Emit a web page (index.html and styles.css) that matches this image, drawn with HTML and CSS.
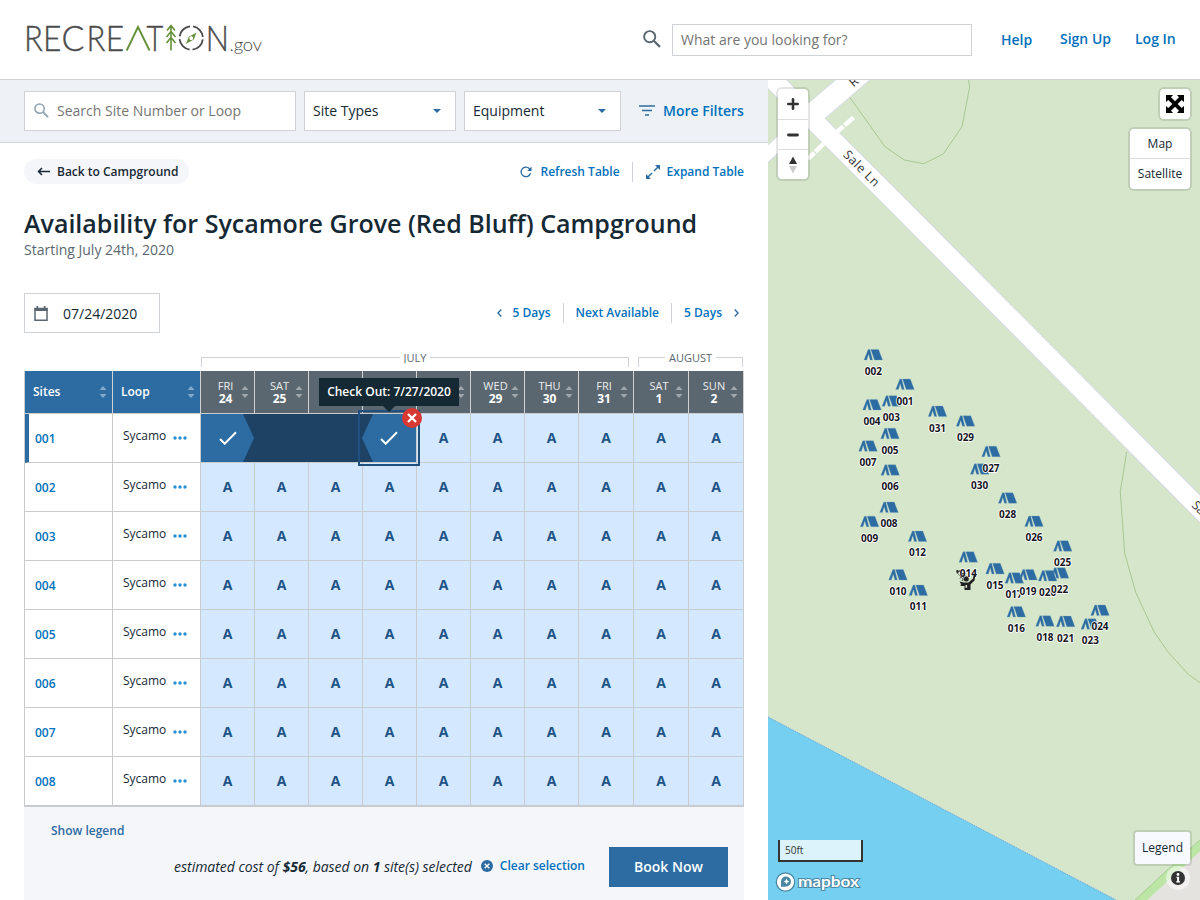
FILE: index.html
```html
<!DOCTYPE html>
<html lang="en">
<head>
<meta charset="utf-8">
<title>Availability for Sycamore Grove (Red Bluff) Campground</title>
<link rel="stylesheet" href="styles.css">
</head>
<body>
<svg class="defs" aria-hidden="true">
  <symbol id="sort" viewBox="0 0 8 14"><path d="M0.5 5 4 1l3.500 4zM0.500 9h7L4 13z" fill="currentColor"/></symbol>
  <symbol id="dots" viewBox="0 0 14 4"><circle cx="2" cy="2" r="1.700"/><circle cx="7" cy="2" r="1.700"/><circle cx="12" cy="2" r="1.700"/></symbol>
  <symbol id="glass" viewBox="0 0 18 18"><circle cx="6.700" cy="6.700" r="5.600" fill="none" stroke="currentColor" stroke-width="1.900"/><path d="M10.800 10.800 16.900 16.900" stroke="currentColor" stroke-width="2.200"/></symbol>
  <symbol id="check" viewBox="0 0 18 14"><path d="M1 8l4.700 4.700L17 1.300" fill="none" stroke="#fff" stroke-width="2"/></symbol>
  <g id="tent"><path transform="translate(10 6)" d="M-9.300 5.300-5.200-5.300h1.900L-.7 5.300h-2.400L-4.800-.5-6.600 5.300zM-2.500-5.300H5.300L9.300 5.300H1.200z" fill="#2d6ca2" stroke="#7fa9c0" stroke-width=".3"/></g>
</svg>

<header class="top">
  <svg class="logo" viewBox="24 20 242 38">
    <g class="logo-letters">
      <text transform="translate(24.100 50.700) scale(.9 1)">R</text>
      <text transform="translate(43.100 50.700) scale(.92 1)">E</text>
      <text transform="translate(61.500 50.700) scale(.98 1)">C</text>
      <text transform="translate(86.500 50.700) scale(.9 1)">R</text>
      <text transform="translate(105.700 50.700) scale(.92 1)">E</text>
      <text transform="translate(146.500 50.700) scale(.84 1)">T</text>
      <text transform="translate(205.700 50.700) scale(.89 1)">N</text>
    </g>
    <text class="logo-gov" x="229.500" y="50.800" textLength="32.500">.gov</text>
    <g fill="none" stroke="#66913b" stroke-width="1.900">
      <path d="M126.700 50.500 138 27l11.500 23.500"/>
      <path d="M171 50.500V25M167 30.500l4-5 4 5M166.500 37l4.500-5.500 4.500 5.500M166.500 43l4.500-5.500 4.500 5.500" stroke-width="1.600"/>
    </g>
    <circle cx="191.200" cy="38" r="11.700" fill="none" stroke="#4b4b4b" stroke-width="1.800" stroke-dasharray="15.380 3" stroke-dashoffset="-1.500"/>
    <path d="M196.500 32.500 193.800 39.500 186 43.800l2.800-7zM191.200 36.300a1.900 1.900 0 1 0 .01 0z" fill="#66913b" fill-rule="evenodd"/>
  </svg>
  <div class="site-search">
    <svg class="glass dark"><use href="#glass"/></svg>
    <div class="field wide">What are you looking for?</div>
  </div>
  <nav class="account"><a class="help">Help</a><a class="signup">Sign Up</a><a>Log In</a></nav>
</header>

<main class="page">
<section class="panel">
  <div class="filters">
    <div class="field find"><svg class="glass pale"><use href="#glass"/></svg>Search Site Number or Loop</div>
    <div class="field select types">Site Types<i class="caret"></i></div>
    <div class="field select equip">Equipment<i class="caret"></i></div>
    <a class="more"><svg width="16" height="11" viewBox="0 0 16 11"><path d="M0 1h16M3 5.500h10M6 10h4" stroke="#2d6ca2" stroke-width="1.700"/></svg>More Filters</a>
  </div>

  <div class="content">
    <div class="tools">
      <a class="back"><svg width="13" height="9" viewBox="0 0 13 9"><path d="M13 4.500H1.500M5 1 1.500 4.500 5 8" fill="none" stroke="#152935" stroke-width="1.500"/></svg>Back to Campground</a>
      <div class="tool-links">
        <a class="refresh"><svg width="12" height="12" viewBox="0 0 12 12"><path d="M10.500 7.300A4.800 4.800 0 1 1 9.500 2.700L11 4.200" fill="none" stroke="#2d6ca2" stroke-width="1.300"/><path d="M11.500.5v4.400H7.300z" fill="#2d6ca2"/></svg>Refresh Table</a>
        <a class="expand"><svg width="14" height="14" viewBox="0 0 14 14"><path d="M9 0h5v5zM0 9v5h5z" fill="#2d6ca2"/><path d="M12 2 8 6M6 8 2 12" stroke="#2d6ca2" stroke-width="1.500"/></svg>Expand Table</a>
      </div>
    </div>
    <h1>Availability for Sycamore Grove (Red Bluff) Campground</h1>
    <p class="starting">Starting July 24th, 2020</p>

    <div class="date-row">
      <div class="field date"><svg width="14" height="15" viewBox="0 0 14 15"><path d="M1 2.500h12v11.700H1z" fill="none" stroke="#5b6770" stroke-width="1.500"/><path d="M.5 2h13v3H.5zM2.500 0h1.700v3H2.500zM9.800 0h1.700v3H9.800z" fill="#5b6770"/></svg>07/24/2020</div>
      <div class="paging">
        <a class="prev"><svg width="5" height="8" viewBox="0 0 5 8"><path d="M4.300.5.900 4l3.400 3.500" fill="none" stroke="#2d6ca2" stroke-width="1.400"/></svg>5 Days</a>
        <a class="next-av">Next Available</a>
        <a class="next">5 Days<svg width="5" height="8" viewBox="0 0 5 8"><path d="M.7.5 4.100 4 .7 7.500" fill="none" stroke="#2d6ca2" stroke-width="1.400"/></svg></a>
      </div>
    </div>

    <div class="months">
      <div class="month july"><span>JULY</span></div>
      <div class="month august"><span>AUGUST</span></div>
    </div>

    <table class="grid">
      <colgroup><col class="c-site"><col class="c-loop"><col span="7" class="c-day"><col span="3" class="c-day-wide"></colgroup>
      <thead><tr>
        <th class="name"><div><em>Sites</em><svg><use href="#sort"/></svg></div></th>
        <th class="name"><div><em>Loop</em><svg><use href="#sort"/></svg></div></th>
        <th><div><span>FRI<b>24</b></span><svg><use href="#sort"/></svg></div></th>
        <th><div><span>SAT<b>25</b></span><svg><use href="#sort"/></svg></div></th>
        <th></th>
        <th></th>
        <th><div><span></span><svg><use href="#sort"/></svg></div></th>
        <th><div><span>WED<b>29</b></span><svg><use href="#sort"/></svg></div></th>
        <th><div><span>THU<b>30</b></span><svg><use href="#sort"/></svg></div></th>
        <th><div><span>FRI<b>31</b></span><svg><use href="#sort"/></svg></div></th>
        <th><div><span>SAT<b>1</b></span><svg><use href="#sort"/></svg></div></th>
        <th><div><span>SUN<b>2</b></span><svg><use href="#sort"/></svg></div></th>
      </tr></thead>
      <tbody>
        <tr class="chosen"><td class="site">001</td><td class="loop">Sycamo<svg><use href="#dots"/></svg></td>
          <td colspan="4" class="range"><div class="stay">
            <span class="from"><svg><use href="#check"/></svg></span><span class="to"><svg><use href="#check"/></svg></span>
            <span class="ring"></span>
            <span class="remove"><svg width="10" height="10" viewBox="0 0 10 10"><path d="M1 1l8 8M9 1 1 9" stroke="#fff" stroke-width="2.300"/></svg></span>
            <span class="tip">Check Out: 7/27/2020</span>
          </div></td>
          <td>A</td><td>A</td><td>A</td><td>A</td><td>A</td><td>A</td></tr>
        <tr><td class="site">002</td><td class="loop">Sycamo<svg><use href="#dots"/></svg></td><td>A</td><td>A</td><td>A</td><td>A</td><td>A</td><td>A</td><td>A</td><td>A</td><td>A</td><td>A</td></tr>
        <tr><td class="site">003</td><td class="loop">Sycamo<svg><use href="#dots"/></svg></td><td>A</td><td>A</td><td>A</td><td>A</td><td>A</td><td>A</td><td>A</td><td>A</td><td>A</td><td>A</td></tr>
        <tr><td class="site">004</td><td class="loop">Sycamo<svg><use href="#dots"/></svg></td><td>A</td><td>A</td><td>A</td><td>A</td><td>A</td><td>A</td><td>A</td><td>A</td><td>A</td><td>A</td></tr>
        <tr><td class="site">005</td><td class="loop">Sycamo<svg><use href="#dots"/></svg></td><td>A</td><td>A</td><td>A</td><td>A</td><td>A</td><td>A</td><td>A</td><td>A</td><td>A</td><td>A</td></tr>
        <tr><td class="site">006</td><td class="loop">Sycamo<svg><use href="#dots"/></svg></td><td>A</td><td>A</td><td>A</td><td>A</td><td>A</td><td>A</td><td>A</td><td>A</td><td>A</td><td>A</td></tr>
        <tr><td class="site">007</td><td class="loop">Sycamo<svg><use href="#dots"/></svg></td><td>A</td><td>A</td><td>A</td><td>A</td><td>A</td><td>A</td><td>A</td><td>A</td><td>A</td><td>A</td></tr>
        <tr><td class="site">008</td><td class="loop">Sycamo<svg><use href="#dots"/></svg></td><td>A</td><td>A</td><td>A</td><td>A</td><td>A</td><td>A</td><td>A</td><td>A</td><td>A</td><td>A</td></tr>
      </tbody>
    </table>

    <footer class="booking">
      <a class="show-legend">Show legend</a>
      <div class="cost-row">
        <em>estimated cost of <b>$56</b>, based on <b>1</b> site(s) selected</em>
        <a class="clear"><svg width="12" height="12" viewBox="0 0 12 12"><circle cx="6" cy="6" r="6" fill="#2d6ca2"/><path d="M3.700 3.700l4.600 4.600M8.300 3.700 3.700 8.300" stroke="#fff" stroke-width="1.400"/></svg>Clear selection</a>
        <button class="book">Book Now</button>
      </div>
    </footer>
  </div>
</section>

<section class="map">
  <svg class="canvas" viewBox="768 80 432 820">
    <path d="M768 80h432v820H768z" fill="#d5e6ca"/>
    <path d="M768 717 1116 900H768z" fill="#75cff0"/>
    <path d="M768 717 1116 900" stroke="#6fa9dc" stroke-width="1" stroke-dasharray="1.500 1"/>
    <path d="M1200 849 1141 900H1200z" fill="#e4e3df"/>
    <path d="M1203 843 1138 903" stroke="#bce6a6" stroke-width="8"/>
    <path d="M1202 838 1134 901" stroke="#a5cd90" stroke-width="1"/>
    <g fill="none" stroke="#a9c794" stroke-width="1">
      <path d="M849.300 96.700 885 146.700 904.300 160 923.700 163.700 943.300 154 962 126.700 969.700 86.700 968.300 80"/>
      <path d="M1126.700 451.700 1120.300 491.700 1124.700 553.300 1135.700 592.300 1154 631.700 1168.300 652.300 1188.300 674.300 1200 682.700"/>
    </g>
    <g stroke="#d6dce2">
      <path d="M750 57 899.500 206.500 1215 524" fill="none" stroke-width="20.500"/>
      <path d="M813 114 870 65" stroke-width="23.500"/>
      <path d="M760 161 816 110" stroke-width="14"/>
    </g>
    <g stroke="#fff" fill="none">
      <path d="M750 57 899.500 206.500 1215 524" stroke-width="18.500"/>
      <path d="M813 114 870 65" stroke-width="21.500"/>
      <path d="M760 161 816 110" stroke-width="12"/>
      <path d="M853.500 117.500 834 134.500M824 143.500 808 159" stroke-width="4.500" stroke-dasharray="12 1.500"/>
    </g>
    <g class="street">
      <text transform="translate(842.500 155.500) rotate(45)" textLength="45">Sale Ln</text>
      <text transform="translate(1191 506) rotate(45)">Sa</text>
      <text transform="translate(853.500 87.500) rotate(-40)">R</text>
    </g>
    <g class="tents">
      <use href="#tent" x="863.300" y="348.700"/><use href="#tent" x="895" y="378.300"/><use href="#tent" x="881.300" y="395"/><use href="#tent" x="862" y="398.700"/><use href="#tent" x="927.500" y="405.300"/><use href="#tent" x="955.500" y="415"/><use href="#tent" x="880" y="427.500"/><use href="#tent" x="858" y="440"/><use href="#tent" x="981" y="445.500"/><use href="#tent" x="969.700" y="463"/><use href="#tent" x="880.200" y="464"/><use href="#tent" x="997.600" y="492"/><use href="#tent" x="879" y="501.300"/><use href="#tent" x="1024" y="515.300"/><use href="#tent" x="859.600" y="515.500"/><use href="#tent" x="907.500" y="530.300"/><use href="#tent" x="1052.700" y="540"/><use href="#tent" x="958.300" y="551"/><use href="#tent" x="985" y="562.600"/><use href="#tent" x="1049.600" y="567"/><use href="#tent" x="1018" y="568.700"/><use href="#tent" x="888" y="568.800"/><use href="#tent" x="1037.600" y="569.700"/><use href="#tent" x="1004.300" y="572"/><use href="#tent" x="908.300" y="584.300"/><use href="#tent" x="1090" y="604.300"/><use href="#tent" x="1006.300" y="605.800"/><use href="#tent" x="1035" y="615"/><use href="#tent" x="1055.600" y="615.400"/><use href="#tent" x="1080.300" y="618"/>
    </g>
    <g class="pins">
      <text x="873.300" y="375">002</text><text x="891.300" y="421">003</text><text x="905" y="404.500">001</text><text x="872" y="425">004</text><text x="937.500" y="431.500">031</text><text x="965.500" y="441">029</text><text x="890" y="453.500">005</text><text x="868" y="466">007</text><text x="890.200" y="490">006</text><text x="979.700" y="489">030</text><text x="991" y="471.500">027</text><text x="1007.600" y="518">028</text><text x="889" y="527.300">008</text><text x="869.600" y="541.500">009</text><text x="1034" y="541.300">026</text><text x="917.500" y="556.300">012</text><text x="1062.700" y="566">025</text><text x="968.300" y="577">014</text><text x="995" y="588.600">015</text><text x="898" y="594.800">010</text><text x="918.300" y="610.300">011</text><text x="1014" y="598">017</text><text x="1028" y="594.700">019</text><text x="1047.600" y="595.700">020</text><text x="1059.600" y="593">022</text><text x="1016.300" y="631.800">016</text><text x="1045" y="641">018</text><text x="1065.600" y="641.500">021</text><text x="1090.300" y="644">023</text><text x="1100" y="630.300">024</text>
    </g>
    <g fill="#222">
      <circle cx="966.300" cy="579" r="2.500"/>
      <path d="M959.500 581.500 964 582.500H968.500L973 578.500 973.800 573.500 975.600 574.500 974.500 580.500 970.500 584.500V590H964.500V586H960.500L961 584z"/>
      <path d="M965.500 585h1.600v2.800H965.500z" fill="#d5e6ca"/>
      <path d="M956.500 570.500l3 .2-2.300 2.800zM958 573.500l6 7M959.500 571.500l7 5M960 578.500l4-6M962 581l3-8" stroke="#222" stroke-width=".9" stroke-dasharray="1.500 1"/>
    </g>
  </svg>

  <div class="controls">
    <button><svg width="12" height="12" viewBox="0 0 12 12"><path d="M6 1.300v9.400M1.300 6h9.400" stroke="#333" stroke-width="2.600" stroke-linecap="round"/></svg></button>
    <button><svg width="12" height="12" viewBox="0 0 12 12"><path d="M1.500 6h9" stroke="#333" stroke-width="2.800" stroke-linecap="round"/></svg></button>
    <button><svg width="8" height="18" viewBox="0 0 8 18"><path d="M0 8 4 .5 8 8z" fill="#333"/><path d="M0 10h8l-4 7.500z" fill="#ccc"/></svg></button>
  </div>
  <div class="full"><svg width="18" height="18" viewBox="0 0 18 18"><path d="M0 0h7L5 2.300 9 6.300l4-4L11 0h7v7l-2.300-2-4 4 4 4L18 11v7h-7l2-2.300-4-4-4 4L7 18H0v-7l2.300 2 4-4-4-4L0 7z"/></svg></div>
  <div class="layers"><span>Map</span><span>Satellite</span></div>
  <div class="legend">Legend</div>
  <div class="info"><svg width="14" height="14" viewBox="0 0 14 14"><circle cx="7" cy="7" r="7" fill="#333"/><path d="M5.500 5.800h2.600v4.400h1v1.300H5.200v-1.300h.9V7h-.6z" fill="#fff"/><circle cx="7" cy="3.500" r="1.400" fill="#fff"/></svg></div>
  <div class="scale">50ft</div>
  <svg class="mapbox" width="86" height="22" viewBox="0 0 86 22">
    <circle cx="10.500" cy="11" r="9.200" fill="#fff" stroke="#4a87a3" stroke-width="1.200"/>
    <path d="M6 15.700V10.400A5 5 0 1 1 11.400 15.500Q9 16 6 15.700z" fill="#4a87a3"/>
    <path d="M11.500 7.600l.9 2 2 .9-2 .9-.9 2-.9-2-2-.9 2-.9z" fill="#fff"/>
    <text x="23" y="15.500" textLength="61" lengthAdjust="spacingAndGlyphs">mapbox</text>
  </svg>
</section>
</main>
</body>
</html>
```
FILE: styles.css
```css
* { box-sizing: border-box; }
body { margin: 0; width: 1200px; height: 900px; overflow: hidden; background: #fff; color: #152935; font-family: "Open Sans", "Noto Sans", sans-serif; font-size: 14px; }
svg { display: block; flex: none; }
.defs { position: absolute; width: 0; height: 0; }
a { color: #0071bc; font-weight: 600; }
button { font: inherit; border: 0; padding: 0; }

.top { display: flex; height: 80px; border-bottom: 1px solid #d0d4d8; padding: 0 24px; }
.logo { width: 242px; height: 38px; margin-top: 20px; overflow: visible; }
.logo-letters { font-family: Lato, sans-serif; font-weight: 300; font-size: 34.5px; fill: #4b4b4b; stroke: #4b4b4b; stroke-width: .4px; }
.logo-gov { font-family: Lato, sans-serif; font-weight: 300; font-size: 18.5px; fill: #4b4b4b; }
.site-search { display: flex; margin: 24px 0 0 377px; }
.glass { width: 18px; height: 18px; }
.glass.dark { color: #5b6770; margin: 6px 11px 0 0; }
.glass.pale { color: #91a4b5; width: 15px; height: 15px; margin-right: 8px; }
.field { display: flex; align-items: center; background: #fff; border: 1px solid #cfd3d7; height: 40px; color: #152935; }
.field.wide { width: 300px; height: 32px; padding: 0 0 1px 8px; color: #757575; }
.account { display: flex; align-items: center; height: 32px; margin-top: 22px; white-space: nowrap; }
.help { width: 59px; margin-left: 29px; padding-top: 2px; }
.signup { width: 75px; }

.page { display: flex; height: 820px; }
.panel { width: 768px; }
.filters { display: flex; height: 63px; padding: 11px 24px 0; background: #eef2f6; border-bottom: 1px solid #cfd5da; gap: 8px; }
.find { width: 272px; padding: 0 0 2px 9px; color: #757575; }
.select { justify-content: space-between; padding: 0 14px 2px 8px; }
.types { width: 152px; }
.equip { width: 157px; }
.caret { margin-top: 1px; border: 4px solid transparent; border-top-color: #2d6ca2; border-bottom: 0; }
.more { display: flex; align-items: center; gap: 8px; height: 38px; margin-left: 10px; white-space: nowrap; }

.content { padding: 16px 24px 0; }
.tools { display: flex; justify-content: space-between; align-items: center; height: 25px; font-size: 12px; }
.back { display: flex; align-items: center; gap: 7px; width: 165px; height: 25px; padding-left: 13px; border-radius: 13px; background: #f5f6fa; color: #152935; }
.tool-links { display: flex; align-items: center; }
.tool-links a { display: flex; align-items: center; height: 20px; }
.refresh { gap: 9px; padding-right: 12px; border-right: 1px solid #cfd3d7; }
.expand { gap: 7px; padding-left: 13px; }
h1 { margin: 22px 0 0; font-size: 25px; line-height: 34px; font-weight: 600; white-space: nowrap; }
.starting { margin: 0; line-height: 20px; font-size: 14px; color: #5b6770; }

.date-row { display: flex; justify-content: space-between; height: 40px; margin-top: 33px; }
.date { width: 136px; padding-left: 9px; gap: 15px; }
.paging { display: flex; height: 20px; margin: 10px 5px 0 0; font-size: 12px; line-height: 20px; }
.paging a { display: flex; align-items: center; }
.prev { gap: 11px; padding-right: 12px; border-right: 1px solid #cfd3d7; }
.next-av { padding: 0 12px; border-right: 1px solid #cfd3d7; }
.next { gap: 12px; padding-left: 12px; }

.months { display: flex; gap: 9px; height: 38px; padding: 20px 0 0 177px; overflow: hidden; }
.month { display: flex; justify-content: center; height: 18px; font-size: 11px; line-height: 10px; color: #5b6770; }
.month::before, .month::after { content: ""; flex: 1; height: 9px; margin-top: 4px; border-top: 1px solid #cfd3d7; }
.month::before { border-left: 1px solid #cfd3d7; }
.month::after { border-right: 1px solid #cfd3d7; }
.month span { padding: 0 4px; height: 10px; }
.july { width: 428px; }
.july span { overflow: hidden; }
.august { width: 105px; }

.grid { width: 720px; table-layout: fixed; border-collapse: separate; border-spacing: 0; border-left: 1px solid #c9cbcd; }
.c-site, .c-loop { width: 88px; }
.c-day { width: 54px; }
.c-day-wide { width: 55px; }
.grid th { height: 43px; padding: 0; background: #5b6770; color: #fff; border-right: 1px solid #d0d2d4; border-bottom: 1px solid #c9cbcd; font-weight: 400; }
.grid th div { display: flex; align-items: center; }
.grid th span { flex: 1; padding-left: 9px; font-size: 11px; line-height: 12px; color: #e9ecee; }
.grid th b { display: block; font-size: 12px; line-height: 13px; color: #fff; }
.grid th svg { width: 8px; height: 14px; margin-right: 5px; color: #a0a8ae; }
.grid th.name { background: #2d6ca2; }
.grid th.name div { justify-content: space-between; padding-left: 8px; font-size: 12px; font-weight: 600; }
.grid th em { font-style: normal; padding-bottom: 2px; }
.grid th.name svg { color: #85a9cb; }
.grid td { height: 49px; padding: 0 0 2px; text-align: center; background: #d4e8ff; color: #205386; font-weight: 700; font-size: 14px; border-right: 1px solid #c9cbcd; border-bottom: 1px solid #c9cbcd; }
.grid tr:last-child td { border-bottom-width: 2px; height: 50px; }
.grid td.site { background: #fff; color: #0071bc; font-weight: 600; font-size: 12px; text-align: left; padding: 0 0 0 10px; }
.grid .chosen td.site { border-left: 4px solid #2d6ca2; padding-left: 6px; }
.grid td.loop { background: #fff; color: #152935; font-weight: 400; font-size: 12px; text-align: left; padding: 0 0 6px 10px; }
.loop svg { display: inline-block; width: 14px; height: 4px; margin-left: 7px; vertical-align: 0; fill: #2491d6; }
.grid td.range { background: #1d4263; padding: 0; }
.stay { position: relative; display: flex; justify-content: space-between; height: 48px; }
.from, .to { display: flex; align-items: center; justify-content: center; background: #2d6ca2; }
.from { width: 53px; clip-path: polygon(0 0, 42px 0, 100% 50%, 42px 100%, 0 100%); }
.to { width: 54px; clip-path: polygon(11px 0, 100% 0, 100% 100%, 11px 100%, 0 50%); }
.stay .from svg, .stay .to svg { width: 18px; height: 14px; }
.ring { position: absolute; left: 157px; top: -4px; width: 62px; height: 56px; border: 2px solid #205080; }
.remove { position: absolute; left: 201px; top: -6px; width: 20px; height: 20px; display: flex; align-items: center; justify-content: center; border-radius: 50%; background: #d83933; }
.tip { position: absolute; left: 118px; top: -36px; width: 140px; height: 28px; background: #152935; color: #fff; font-size: 12px; font-weight: 600; line-height: 27px; white-space: nowrap; }
.tip::after { content: ""; position: absolute; left: 64px; top: 28px; border: 6px solid transparent; border-top-color: #152935; border-bottom: 0; }

.booking { height: 94px; background: #f5f6fa; padding-top: 14px; }
.show-legend { display: block; margin-left: 27px; font-size: 12px; line-height: 20px; color: #2d6ca2; }
.cost-row { display: flex; justify-content: flex-end; align-items: center; margin-top: 6px; padding-right: 16px; height: 40px; white-space: nowrap; }
.cost-row em { padding-bottom: 2px; letter-spacing: -.03px; }
.clear { display: flex; align-items: center; gap: 7px; margin: -3px 24px 0 9px; font-size: 12px; }
.book { width: 119px; height: 40px; background: #2d6ca2; color: #fff; font-weight: 600; padding-bottom: 2px; }

.map { position: relative; width: 432px; height: 820px; overflow: hidden; }
.canvas { width: 432px; height: 820px; }
.street { font-size: 12.5px; fill: #333; }
.pins { font-size: 10px; font-weight: 700; fill: #16161d; text-anchor: middle; stroke: #fff; stroke-width: 1.6px; stroke-linejoin: round; paint-order: stroke; }
.controls, .full, .layers, .legend { position: absolute; background: #fff; border-radius: 4px; box-shadow: 0 0 0 2px rgba(0,0,0,.1); }
.controls { left: 10px; top: 9px; width: 30px; }
.controls button { display: flex; align-items: center; justify-content: center; width: 30px; height: 30px; background: none; }
.controls button + button { border-top: 1px solid #ddd; }
.full { left: 392px; top: 9px; width: 30px; height: 30px; display: flex; align-items: center; justify-content: center; }
.layers { left: 362px; top: 49px; width: 60px; height: 60px; font-size: 12px; line-height: 30px; text-align: center; }
.layers span { display: block; height: 29px; }
.layers span + span { border-top: 1px solid #ddd; }
.legend { left: 367px; top: 752px; width: 55px; height: 32px; border-radius: 2px; background: #f8f9ff; font-size: 12px; line-height: 31px; text-align: center; }
.info { position: absolute; left: 398px; top: 786px; width: 24px; height: 24px; border-radius: 50%; background: rgba(255,255,255,.5); display: flex; align-items: center; justify-content: center; }
.scale { position: absolute; left: 10px; top: 760px; width: 85px; height: 22px; border: 2px solid #333; border-top: 0; background: rgba(255,255,255,.75); font-size: 10px; line-height: 20px; padding-left: 5px; color: #333; }
.mapbox { position: absolute; left: 7px; top: 791px; }
.mapbox text { font-family: Lato, sans-serif; font-weight: 700; font-size: 16px; fill: #fff; stroke: #4a87a3; stroke-width: 2px; paint-order: stroke; }
```
